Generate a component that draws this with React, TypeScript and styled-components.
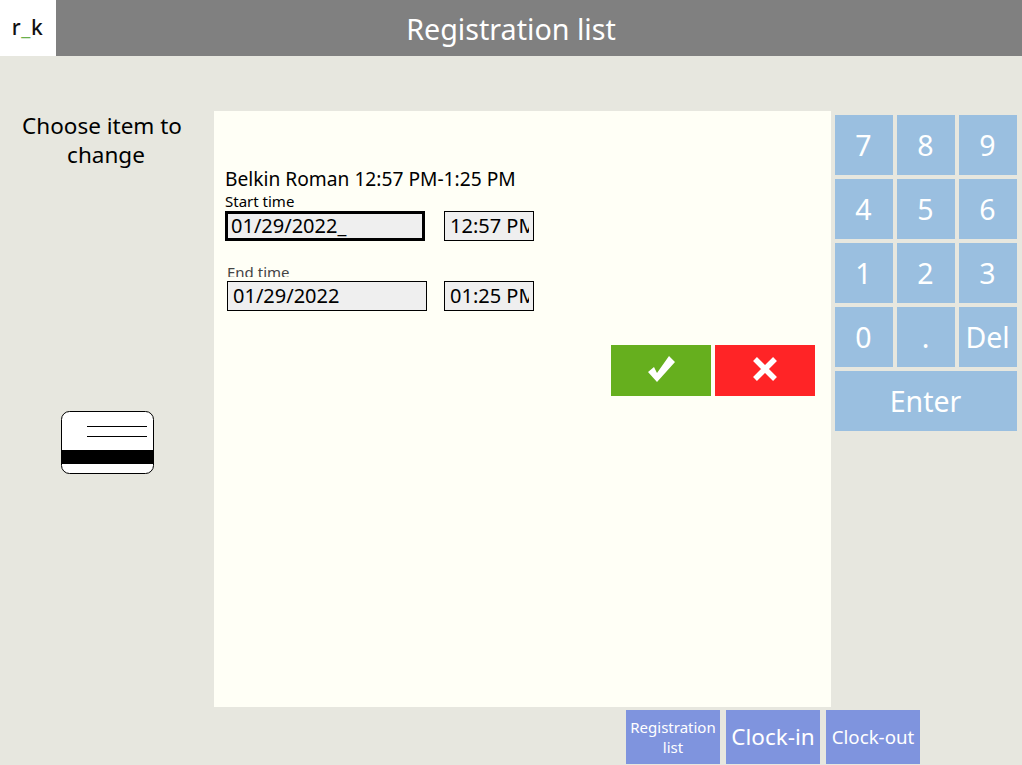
import React from 'react'
import styled, { createGlobalStyle } from 'styled-components'

const GlobalStyle = createGlobalStyle`
    html, body {
        margin: 0;
        padding: 0;
        background: #e7e7df;
        font-family: "Noto Sans", "DejaVu Sans", sans-serif;
    }
    * {
        box-sizing: border-box;
    }
`

const Page = styled.div`
    width: 1022px;
    height: 765px;
    overflow: hidden;
    background: #e7e7df;
    color: #000;
`

const Header = styled.header`
    display: flex;
    height: 56px;
    background: #808080;
`

const Logo = styled.div`
    display: flex;
    align-items: center;
    justify-content: center;
    width: 56px;
    padding: 0 1px 3px 0;
    background: #fff;
    color: #111;
    font-size: 21px;
    font-weight: 500;
    letter-spacing: 0.5px;
    span {
        color: #6ab04c;
    }
`

const Title = styled.h1`
    flex: 1;
    margin: 0 56px 0 0;
    color: #fff;
    font-size: 28.7px;
    font-weight: 400;
    line-height: 57px;
    text-align: center;
`

const Main = styled.main`
    display: grid;
    grid-template-columns: 214px 617px 191px;
    height: 651px;
    padding-top: 55px;
`

const Side = styled.aside`
    display: flex;
    flex-direction: column;
    align-items: center;
`

const Hint = styled.p`
    width: 170px;
    height: 300px;
    margin: 0 0 0 -2px;
    font-size: 22.5px;
    line-height: 29px;
    text-align: center;
    text-indent: -8px;
`

const CardIcon = styled.svg`
    display: block;
    width: 94px;
    height: 64px;
    margin-left: 2px;
`

const Panel = styled.section`
    height: 596px;
    padding: 56px 16px 0 11px;
    background: #fffff6;
`

const Entry = styled.div`
    font-size: 19.2px;
    line-height: 24px;
    white-space: nowrap;
`

const FieldLabel = styled.div<{ $faded?: boolean; $top: number; $height: number; $bottom: number; $offset: number }>`
    height: ${p => p.$height}px;
    margin: ${p => p.$top}px 0 ${p => p.$bottom}px ${p => p.$offset}px;
    overflow: hidden;
    color: ${p => (p.$faded ? '#444' : '#000')};
    font-size: 15px;
    line-height: 17px;
`

const Fields = styled.div<{ $offset?: number }>`
    display: flex;
    align-items: flex-start;
    margin-left: ${p => p.$offset ?? 0}px;
`

const Field = styled.div<{ $width: number; $heavy?: boolean; $gap: number; $pad: number }>`
    width: ${p => p.$width}px;
    height: 30px;
    margin-right: ${p => p.$gap}px;
    padding: 0 ${p => (p.$width < 100 ? 4 : 0)}px 0 ${p => p.$pad}px;
    background: #efefef;
    border: ${p => (p.$heavy ? '3px' : '1px')} solid #000;
    font-size: 20px;
    line-height: ${p => (p.$heavy ? '24px' : '28px')};
    white-space: nowrap;
`

const FieldText = styled.div`
    overflow: hidden;
`

const Actions = styled.div`
    display: flex;
    justify-content: flex-end;
    gap: 4px;
    margin-top: 34px;
`

const ActionButton = styled.button<{ $color: string }>`
    display: flex;
    align-items: center;
    justify-content: center;
    width: 100px;
    height: 51px;
    padding: 0 0 3px;
    background: ${p => p.$color};
    border: 0;
`

const Keypad = styled.div`
    display: grid;
    grid-template-columns: repeat(3, 58px);
    grid-auto-rows: 60px;
    gap: 4px;
    align-self: start;
    margin: 4px 0 0 4px;
`

const Key = styled.button<{ $wide?: boolean }>`
    grid-column: ${p => (p.$wide ? 'span 3' : 'auto')};
    padding: 0 1px 0 0;
    background: #9abfe0;
    border: 0;
    color: #fff;
    font-family: inherit;
    font-size: 28.5px;
`

const Footer = styled.footer`
    display: flex;
    gap: 6px;
    height: 58px;
    padding: 3px 0 0 626px;
`

const NavButton = styled.button<{ $size: number }>`
    width: 94px;
    height: 54px;
    padding: 0;
    background: #7f94de;
    border: 0;
    color: #fff;
    font-family: inherit;
    font-size: ${p => p.$size}px;
    line-height: 20px;
`

const keys = ['7', '8', '9', '4', '5', '6', '1', '2', '3', '0', '.', 'Del']

function App() {
    return (
        <Page>
            <GlobalStyle />
            <Header>
                <Logo>r<span>_</span>k</Logo>
                <Title>Registration list</Title>
            </Header>
            <Main>
                <Side>
                    <Hint>Choose item to change</Hint>
                    <CardIcon viewBox="0 0 94 64">
                        <rect x="0.5" y="0.5" width="92" height="62" rx="8" fill="#fff" stroke="#000" />
                        <path d="M26 15.5h60M26 25.5h60" stroke="#000" />
                        <rect x="0" y="39" width="93" height="14" fill="#000" />
                    </CardIcon>
                </Side>
                <Panel>
                    <Entry>Belkin Roman 12:57 PM-1:25 PM</Entry>
                    <FieldLabel $top={2} $height={15} $bottom={3} $offset={0}>Start time</FieldLabel>
                    <Fields>
                        <Field $width={200} $gap={19} $pad={3} $heavy><FieldText>01/29/2022_</FieldText></Field>
                        <Field $width={90} $gap={0} $pad={5}><FieldText>12:57 PM</FieldText></Field>
                    </Fields>
                    <FieldLabel $faded $top={23} $height={13} $bottom={4} $offset={2}>End time</FieldLabel>
                    <Fields $offset={2}>
                        <Field $width={200} $gap={17} $pad={5}><FieldText>01/29/2022</FieldText></Field>
                        <Field $width={90} $gap={0} $pad={5}><FieldText>01:25 PM</FieldText></Field>
                    </Fields>
                    <Actions>
                        <ActionButton $color="#66af1e" aria-label="Confirm">
                            <svg width="27" height="26" viewBox="0 0 27 26">
                                <path d="M0 16l6-5 3 6L21 0l6 6L9 26z" fill="#fff" />
                            </svg>
                        </ActionButton>
                        <ActionButton $color="#ff2426" aria-label="Cancel">
                            <svg width="26" height="26" viewBox="0 0 26 26">
                                <path d="M3 3l20 20M23 3L3 23" fill="none" stroke="#fff" strokeWidth="5.5" />
                            </svg>
                        </ActionButton>
                    </Actions>
                </Panel>
                <Keypad>
                    {keys.map(k => <Key key={k}>{k}</Key>)}
                    <Key $wide>Enter</Key>
                </Keypad>
            </Main>
            <Footer>
                <NavButton $size={15}>Registration list</NavButton>
                <NavButton $size={22.5}>Clock-in</NavButton>
                <NavButton $size={18.7}>Clock-out</NavButton>
            </Footer>
        </Page>
    )
}

export default App
